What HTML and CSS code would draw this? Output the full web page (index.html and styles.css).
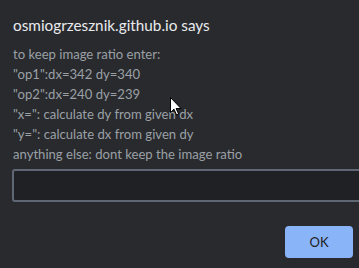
FILE: index.html
```html
<!DOCTYPE html>
<html lang="en">
<head>
  <meta charset="UTF-8">
  <title>Prompt</title>
  <link rel="stylesheet" href="styles.css">
</head>
<body>

<div class="dialog">
  <h1 class="dialog-title">osmiogrzesznik.github.io says</h1>
  <div class="dialog-message">
    <div>to keep image ratio enter:</div>
    <div>"op1":dx=342 dy=340</div>
    <div>"op2":dx=240 dy=239</div>
    <div>"x=": calculate dy from given dx</div>
    <div>"y=": calculate dx from given dy</div>
    <div>anything else: dont keep the image ratio</div>
  </div>
  <input type="text" class="dialog-input">
  <div class="dialog-buttons">
    <button type="button" class="ok-btn">OK</button>
  </div>

  <!-- mouse pointer caught in the screenshot -->
  <svg class="cursor" width="12" height="19" viewBox="0 0 12 19">
    <path d="M0.5 0.5 L0.5 15.5 L4 12.2 L6.6 18 L8.6 17.1 L6.1 11.5 L11 11.5 Z" fill="#fff" stroke="#000" stroke-width="1"/>
  </svg>
</div>

</body>
</html>
```

FILE: styles.css
```css
html, body {
  margin: 0;
  padding: 0;
  background: #292a2d;
}

body {
  width: 359px;
  height: 268px;
  overflow: hidden;
  font-family: Lato, "Open Sans", sans-serif;
}

.dialog {
  position: relative;
  padding: 15px 0 0 13px;
}

.dialog-title {
  margin: 0;
  font-size: 15.3px;
  font-weight: normal;
  color: #e8eaed;
  line-height: 21px;
}

.dialog-message {
  margin-top: 8px;
  font-size: 13.1px;
  line-height: 20px;
  color: #9aa0a6;
}

.dialog-input {
  display: block;
  box-sizing: border-box;
  width: 360px;
  height: 33px;
  margin: 5px 0 0 -1px;
  background: #202124;
  border: 2px solid #5f6774;
  border-radius: 3px;
  outline: none;
}

.dialog-buttons {
  display: flex;
  justify-content: flex-end;
  padding: 24px 6px 0 0;
}

.ok-btn {
  width: 68px;
  height: 32px;
  background: #8ab4f8;
  color: #202124;
  border: none;
  border-radius: 4px;
  font-family: Lato, "Open Sans", sans-serif;
  font-size: 13px;
  cursor: pointer;
}

.cursor {
  position: absolute;
  left: 170px;
  top: 97px;
}
```
